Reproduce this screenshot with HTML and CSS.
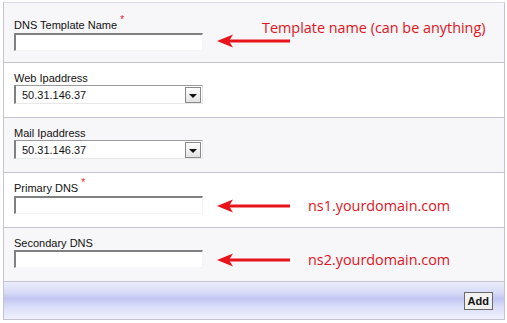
FILE: index.html
```html
<!DOCTYPE html>
<html>
<head>
<meta charset="utf-8">
<link rel="stylesheet" href="styles.css">
</head>
<body>
<div class="form">
  <div class="row row-first alt">
    <div class="field">
      <label class="lbl">DNS Template Name<span class="req">*</span></label>
      <div class="textbox"></div>
    </div>
    <div class="note note-stack">
      <span class="note-text note-top">Template name (can be anything)</span>
      <svg class="arrow" width="76" height="16" viewBox="0 0 76 16"><path d="M74 8H12" stroke="#e8141c" stroke-width="3"/><path d="M1 8L17 1.5L13 8L17 14.5Z" fill="#e8141c"/></svg>
    </div>
  </div>
  <div class="row">
    <div class="field">
      <label class="lbl">Web Ipaddress</label>
      <div class="select"><span class="sel-val">50.31.146.37</span><span class="sel-btn"><i class="tri"></i></span></div>
    </div>
  </div>
  <div class="row alt">
    <div class="field">
      <label class="lbl">Mail Ipaddress</label>
      <div class="select"><span class="sel-val">50.31.146.37</span><span class="sel-btn"><i class="tri"></i></span></div>
    </div>
  </div>
  <div class="row">
    <div class="field">
      <label class="lbl">Primary DNS<span class="req">*</span></label>
      <div class="textbox"></div>
    </div>
    <div class="note">
      <svg class="arrow" width="76" height="16" viewBox="0 0 76 16"><path d="M74 8H12" stroke="#e8141c" stroke-width="3"/><path d="M1 8L17 1.5L13 8L17 14.5Z" fill="#e8141c"/></svg>
      <span class="note-text">ns1.yourdomain.com</span>
    </div>
  </div>
  <div class="row alt">
    <div class="field">
      <label class="lbl">Secondary DNS</label>
      <div class="textbox"></div>
    </div>
    <div class="note">
      <svg class="arrow" width="76" height="16" viewBox="0 0 76 16"><path d="M74 8H12" stroke="#e8141c" stroke-width="3"/><path d="M1 8L17 1.5L13 8L17 14.5Z" fill="#e8141c"/></svg>
      <span class="note-text">ns2.yourdomain.com</span>
    </div>
  </div>
  <div class="footer">
    <button class="btn">Add</button>
  </div>
</div>
</body>
</html>
```

FILE: styles.css
```css
html, body {
  margin: 0;
  padding: 0;
  background: #ffffff;
}
body {
  padding: 2px 2px 0 3px;
  font-family: "Liberation Sans", Arial, sans-serif;
}
.form {
  border-left: 1px solid #c4c3d6;
  border-right: 1px solid #c4c3d6;
  border-top: 1px solid #dcdbe6;
  width: 500px;
}
.row {
  display: flex;
  align-items: flex-end;
  padding: 9px 0 13px 10px;
  border-bottom: 1px solid #c3c2cf;
  background: #ffffff;
}
.row.alt {
  background: #f7f6f8;
}
.row-first {
  padding-top: 16px;
  padding-bottom: 11px;
}
.field {
  width: 190px;
  flex: none;
}
.lbl {
  display: block;
  font-size: 11px;
  line-height: 12px;
  color: #111111;
  margin-bottom: 1px;
}
.req {
  color: #e0242c;
  font-size: 10px;
  position: relative;
  top: -6px;
  left: 3px;
}
.textbox {
  box-sizing: border-box;
  height: 18px;
  width: 189px;
  background: #ffffff;
  border-top: 2px solid #808080;
  border-left: 2px solid #808080;
  border-right: 1px solid #f4f4f4;
  border-bottom: 1px solid #f4f4f4;
}
.select {
  box-sizing: border-box;
  height: 19px;
  width: 189px;
  background: #ffffff;
  border-top: 1px solid #9a9a9a;
  border-left: 2px solid #808080;
  border-right: 1px solid #e8e8e8;
  border-bottom: 1px solid #e8e8e8;
  display: flex;
  align-items: center;
  justify-content: space-between;
  padding: 0 1px 0 6px;
}
.sel-val {
  font-size: 11px;
  color: #111111;
}
.sel-btn {
  box-sizing: border-box;
  width: 16px;
  height: 16px;
  border: 1px solid #8a8a8a;
  background: linear-gradient(#ffffff, #e2e2e2);
  display: flex;
  align-items: center;
  justify-content: center;
}
.tri {
  width: 0;
  height: 0;
  border-left: 4px solid transparent;
  border-right: 4px solid transparent;
  border-top: 4px solid #111111;
  margin-top: 2px;
}
.note {
  display: flex;
  align-items: center;
  margin-left: 12px;
  margin-bottom: 0;
}
.note-stack {
  flex-direction: column;
  align-items: flex-start;
  margin-bottom: 2px;
}
.arrow {
  display: block;
  flex: none;
}
.note-text {
  font-family: "Open Sans", sans-serif;
  font-size: 14.4px;
  line-height: 16px;
  color: #e0141e;
  margin-left: 16px;
}
.note-top {
  margin-left: 46px;
  line-height: 15px;
  margin-bottom: -2px;
}
.footer {
  height: 37px;
  border-bottom: 1px solid #c4c3d6;
  background: linear-gradient(#eceefb 0%, #d6daf6 30%, #c2c6f2 45%, #d8dcf8 65%, #f0f1fc 100%);
  display: flex;
  align-items: center;
  justify-content: flex-end;
  padding-right: 11px;
}
.btn {
  font-family: "Liberation Sans", Arial, sans-serif;
  font-weight: bold;
  font-size: 11px;
  color: #111111;
  background: #f2f2f0;
  border: 1px solid #6a6a6a;
  padding: 0 3px;
  height: 18px;
  line-height: 16px;
  margin-top: 0;
}
```
